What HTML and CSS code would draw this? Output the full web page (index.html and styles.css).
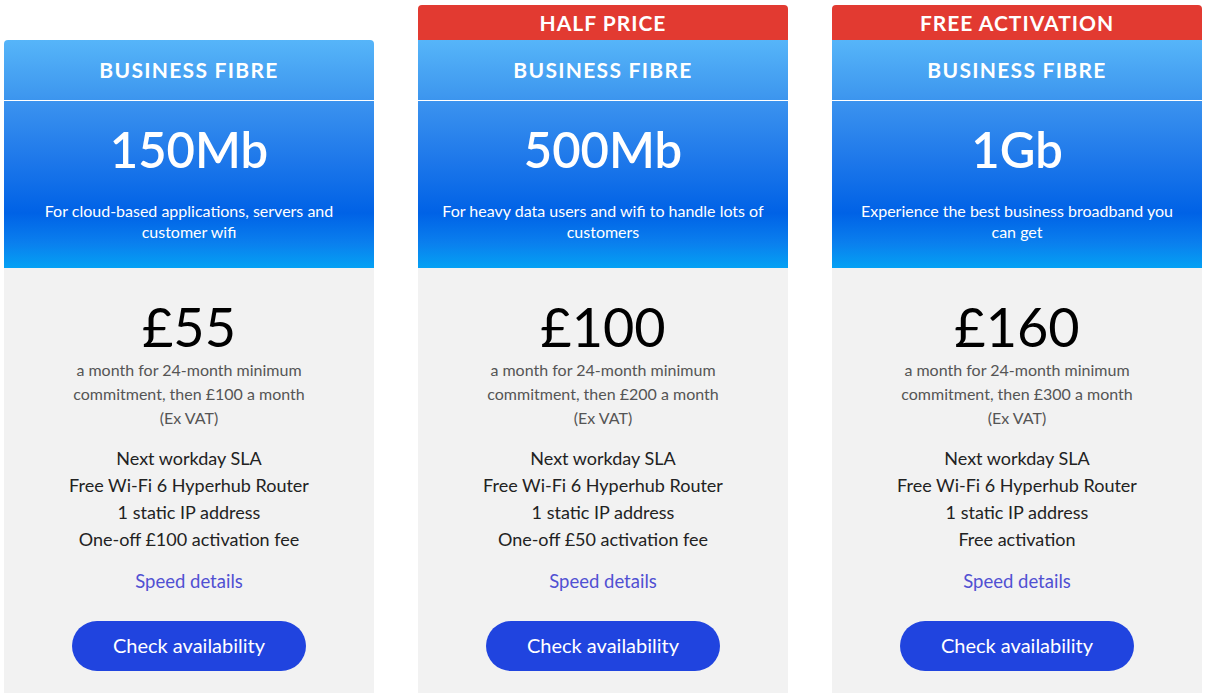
FILE: index.html
```html
<!DOCTYPE html>
<html lang="en">
<head>
<meta charset="utf-8">
<title>Business Fibre plans</title>
<link rel="stylesheet" href="styles.css">
</head>
<body>
<main class="plans">
  <section class="card card--plain">
    <div class="card-title">BUSINESS FIBRE</div>
    <div class="speed">
      <div class="speed-value">150Mb</div>
      <p class="speed-desc">For cloud-based applications, servers and customer wifi</p>
    </div>
    <div class="card-body">
      <div class="price">£55</div>
      <p class="price-note">a month for 24-month minimum<br>commitment, then £100 a month<br>(Ex VAT)</p>
      <ul class="features">
        <li>Next workday SLA</li>
        <li>Free Wi-Fi 6 Hyperhub Router</li>
        <li>1 static IP address</li>
        <li>One-off £100 activation fee</li>
      </ul>
      <a class="details" href="#">Speed details</a>
      <button class="cta" type="button">Check availability</button>
    </div>
  </section>
  <section class="card">
    <div class="badge">HALF PRICE</div>
    <div class="card-title">BUSINESS FIBRE</div>
    <div class="speed">
      <div class="speed-value">500Mb</div>
      <p class="speed-desc">For heavy data users and wifi to handle lots of customers</p>
    </div>
    <div class="card-body">
      <div class="price">£100</div>
      <p class="price-note">a month for 24-month minimum<br>commitment, then £200 a month<br>(Ex VAT)</p>
      <ul class="features">
        <li>Next workday SLA</li>
        <li>Free Wi-Fi 6 Hyperhub Router</li>
        <li>1 static IP address</li>
        <li>One-off £50 activation fee</li>
      </ul>
      <a class="details" href="#">Speed details</a>
      <button class="cta" type="button">Check availability</button>
    </div>
  </section>
  <section class="card">
    <div class="badge">FREE ACTIVATION</div>
    <div class="card-title">BUSINESS FIBRE</div>
    <div class="speed">
      <div class="speed-value">1Gb</div>
      <p class="speed-desc">Experience the best business broadband you can get</p>
    </div>
    <div class="card-body">
      <div class="price">£160</div>
      <p class="price-note">a month for 24-month minimum<br>commitment, then £300 a month<br>(Ex VAT)</p>
      <ul class="features">
        <li>Next workday SLA</li>
        <li>Free Wi-Fi 6 Hyperhub Router</li>
        <li>1 static IP address</li>
        <li>Free activation</li>
      </ul>
      <a class="details" href="#">Speed details</a>
      <button class="cta" type="button">Check availability</button>
    </div>
  </section>
</main>
</body>
</html>
```
FILE: styles.css
```css
* { box-sizing: border-box; }
html, body { margin: 0; padding: 0; background: #fff; }
body {
  font-family: "Lato", "Liberation Sans", sans-serif;
  height: 693px;
  overflow: hidden;
}
.plans {
  display: flex;
  gap: 44px;
  padding: 5px 3px 0 4px;
  height: 100%;
}
.card {
  width: 370px;
  display: flex;
  flex-direction: column;
  text-align: center;
}
.card--plain { padding-top: 35px; }
.card--plain .card-title { border-radius: 4px 4px 0 0; }
.badge {
  height: 35px;
  background: #e23a31;
  color: #fff;
  font-weight: 700;
  font-size: 21px;
  letter-spacing: 1px;
  line-height: 36px;
  border-radius: 4px 4px 0 0;
}
.card-title {
  height: 61px;
  border-bottom: 1px solid #fff;
  background: linear-gradient(#56b5f9, #3c95ee);
  color: #fff;
  font-weight: 700;
  font-size: 21px;
  letter-spacing: 1.3px;
  line-height: 60px;
}
.speed {
  height: 167px;
  padding-top: 15px;
  color: #fff;
  background: linear-gradient(#3b93ef 0%, #1e78ea 35%, #0062e6 67%, #0a7fee 85%, #04a1f4 100%);
}
.speed-value {
  font-size: 49px;
  font-weight: 600;
  line-height: 66px;
}
.speed-desc {
  margin: 18px auto 0;
  width: 330px;
  font-size: 16px;
  line-height: 21px;
}
.card-body {
  flex: 1;
  background: #f2f2f2;
  padding-top: 28px;
  display: flex;
  flex-direction: column;
  align-items: center;
}
.price {
  font-size: 54px;
  line-height: 62px;
  color: #000;
}
.price-note {
  margin: 0;
  font-size: 16px;
  line-height: 24px;
  color: #555;
}
.features {
  list-style: none;
  margin: 15px 0 0;
  padding: 0;
  font-size: 18px;
  line-height: 27px;
  color: #222;
}
.details {
  margin-top: 15px;
  font-size: 18.5px;
  line-height: 27px;
  color: #5050d2;
  text-decoration: none;
}
.cta {
  margin-top: 26px;
  width: 234px;
  height: 50px;
  padding: 0 0 3px;
  border: 0;
  border-radius: 25px;
  background: #2044df;
  color: #fff;
  font-family: inherit;
  font-size: 20px;
  cursor: pointer;
}
```
